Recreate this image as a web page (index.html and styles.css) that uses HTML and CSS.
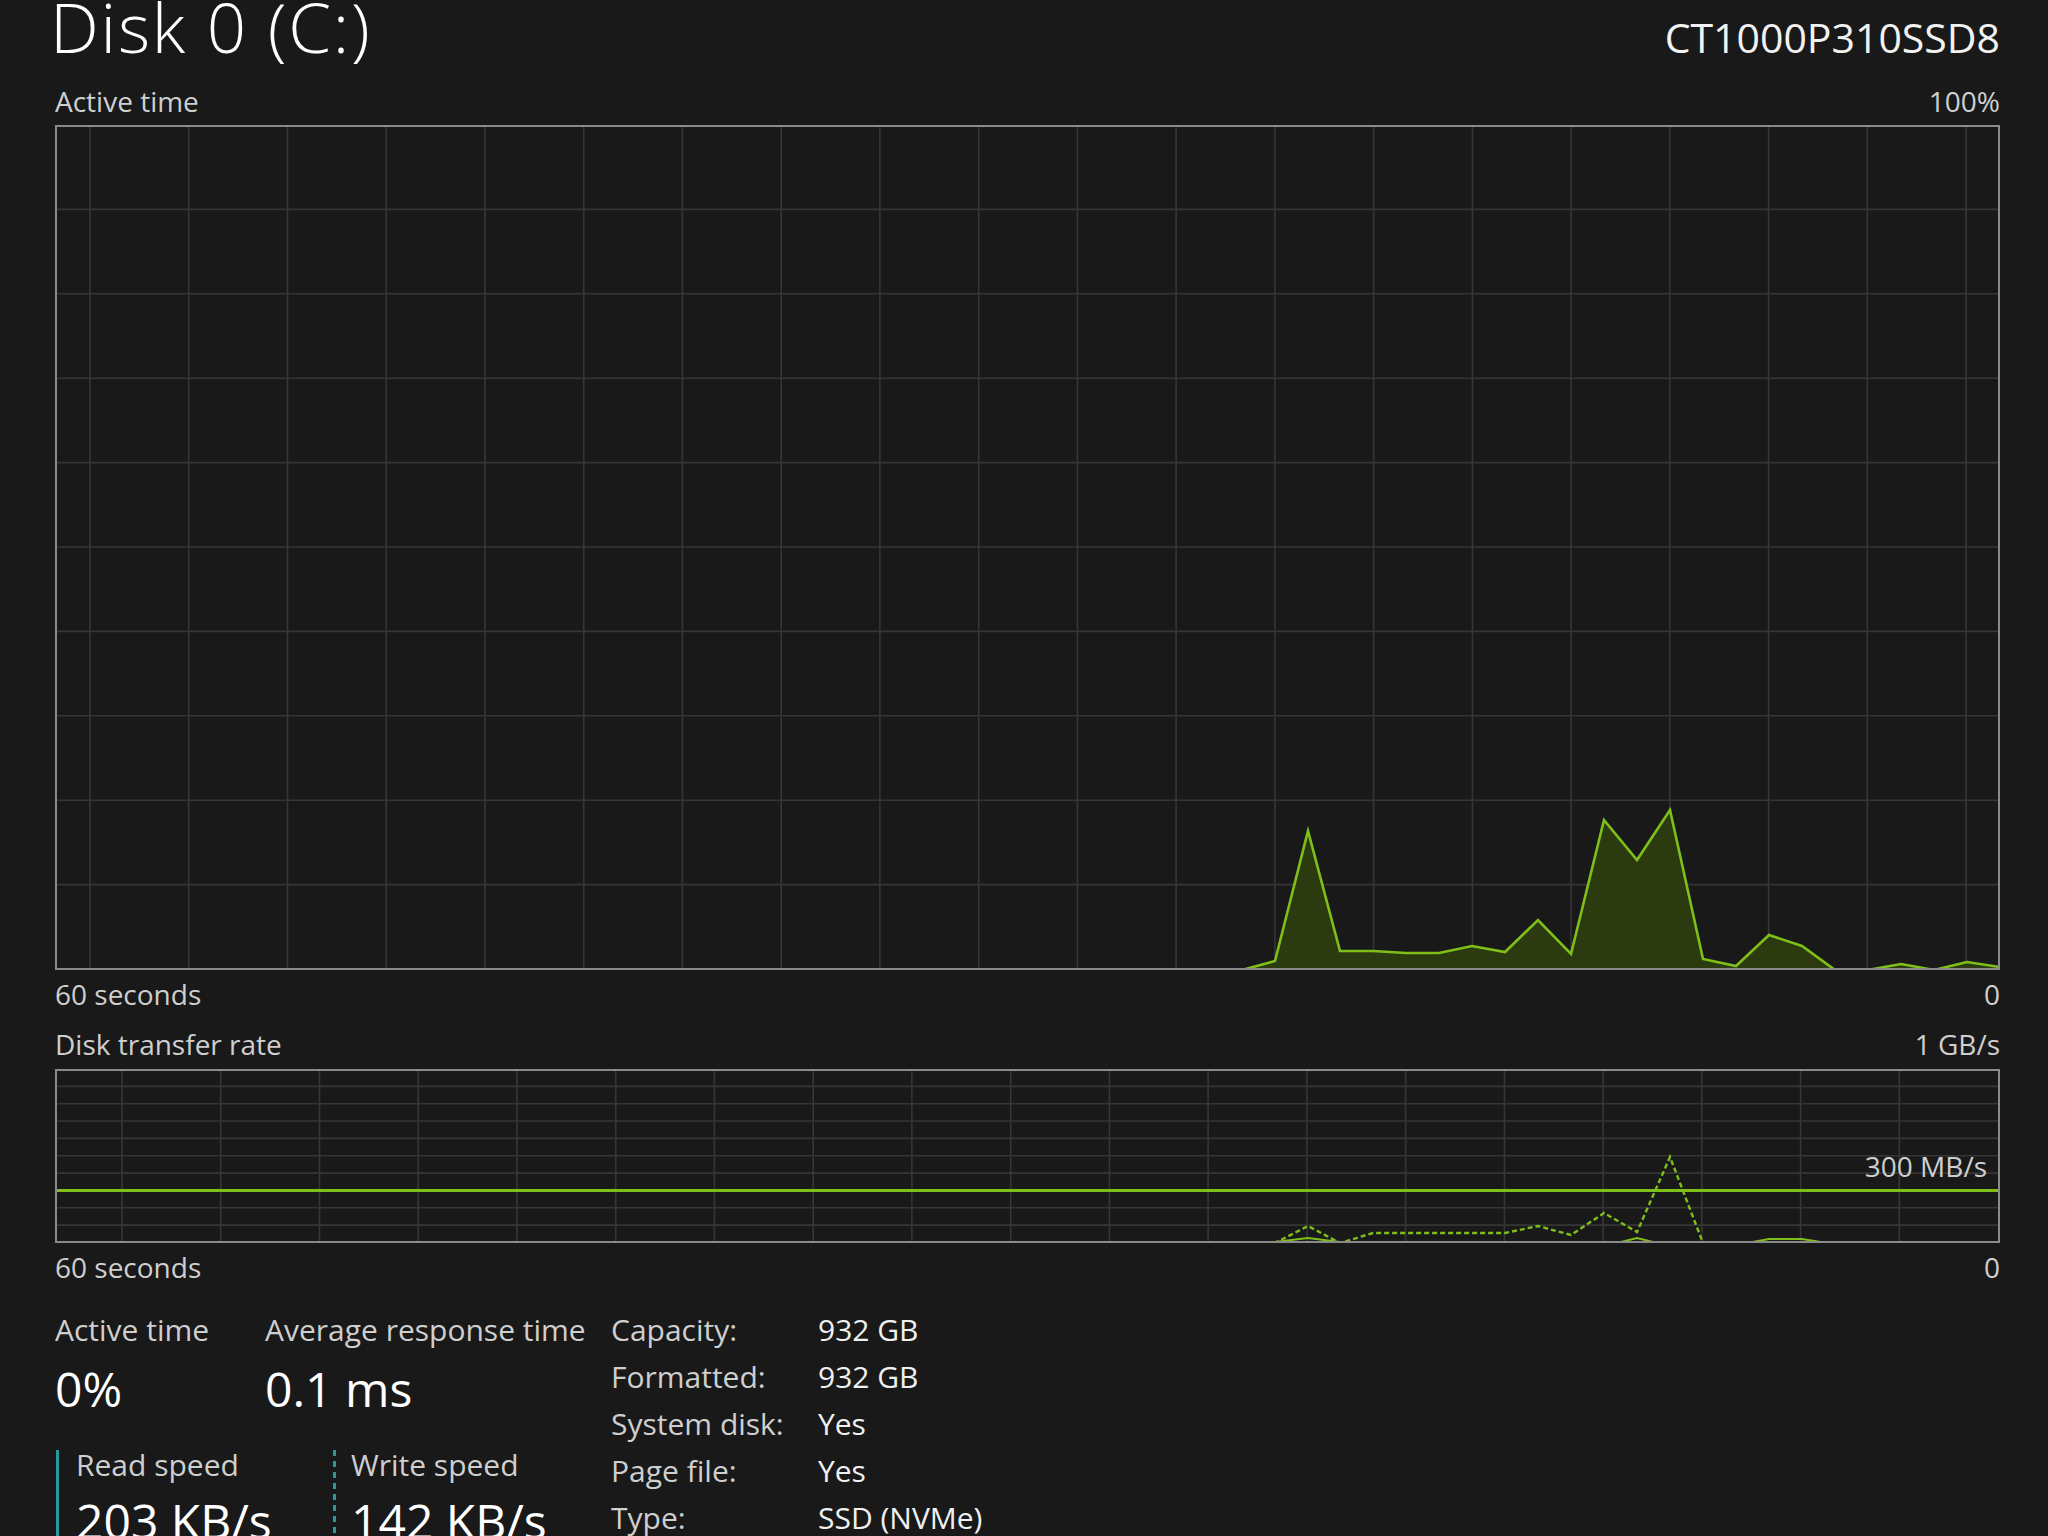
FILE: index.html
```html
<!DOCTYPE html>
<html lang="en">
<head>
<meta charset="utf-8">
<title>Disk 0 (C:)</title>
<link rel="stylesheet" href="styles.css">
</head>
<body>
<main class="page">
  <header class="head">
    <h1 class="title">Disk 0 (C:)</h1>
    <div class="model">CT1000P310SSD8</div>
  </header>

  <div class="axis axis-top"><span>Active time</span><span>100%</span></div>
  <div class="chart chart-active">
    <svg width="1941" height="841" viewBox="0 0 1941 841">
      <path class="grid" d="M0 82.4H1941M0 166.8H1941M0 251.2H1941M0 335.6H1941M0 420H1941M0 504.4H1941M0 588.8H1941M0 673.2H1941M0 757.6H1941"/>
      <path class="grid" d="M33 0V841M131.7 0V841M230.5 0V841M329.2 0V841M428 0V841M526.7 0V841M625.4 0V841M724.2 0V841M822.9 0V841M921.7 0V841M1020.4 0V841M1119.1 0V841M1217.9 0V841M1316.6 0V841M1415.4 0V841M1514.1 0V841M1612.8 0V841M1711.6 0V841M1810.3 0V841M1909.1 0V841"/>
      <polygon class="area" points="0,844 1152,844 1185,843 1218,834 1251,704 1283,824 1316,824 1349,826 1382,826 1415,819 1448,825 1481,793 1514,827 1547,693 1580,733 1613,683 1646,832 1679,839 1712,808 1745,819 1778,843 1811,843 1844,837 1877,843 1910,835 1943,840 1943,844"/>
      <polyline class="line" points="0,844 1152,844 1185,843 1218,834 1251,704 1283,824 1316,824 1349,826 1382,826 1415,819 1448,825 1481,793 1514,827 1547,693 1580,733 1613,683 1646,832 1679,839 1712,808 1745,819 1778,843 1811,843 1844,837 1877,843 1910,835 1943,840"/>
    </svg>
  </div>
  <div class="axis axis-bottom"><span>60 seconds</span><span>0</span></div>

  <div class="axis axis-rate"><span>Disk transfer rate</span><span>1 GB/s</span></div>
  <div class="chart chart-rate">
    <svg width="1941" height="170" viewBox="0 0 1941 170">
      <path class="grid" d="M0 15.35H1941M0 32.7H1941M0 50.05H1941M0 67.4H1941M0 84.75H1941M0 102.1H1941M0 136.8H1941M0 154.15H1941"/>
      <path class="grid" d="M65 0V170M163.7 0V170M262.5 0V170M361.2 0V170M460 0V170M558.7 0V170M657.4 0V170M756.2 0V170M854.9 0V170M953.7 0V170M1052.4 0V170M1151.1 0V170M1249.9 0V170M1348.6 0V170M1447.4 0V170M1546.1 0V170M1644.8 0V170M1743.6 0V170M1842.3 0V170"/>
      <path class="limit" d="M0 119.45H1941"/>
      <polyline class="read" points="1170,172 1218,171 1251,167 1283,171 1560,172 1580,167 1600,172 1690,172 1712,168 1745,168 1770,172"/>
      <polyline class="write" points="1185,172 1218,172 1251,155 1283,172 1316,162 1349,162 1382,162 1415,162 1448,162 1481,155 1514,164 1547,142 1580,161 1613,86 1646,172"/>
    </svg>
    <span class="limit-label">300 MB/s</span>
  </div>
  <div class="axis axis-bottom"><span>60 seconds</span><span>0</span></div>

  <section class="stats">
    <div class="metrics">
      <div class="metric-row">
        <div class="metric metric-active">
          <div class="stat-label">Active time</div>
          <div class="stat-value">0%</div>
        </div>
        <div class="metric metric-resp">
          <div class="stat-label">Average response time</div>
          <div class="stat-value">0.1 ms</div>
        </div>
      </div>
      <div class="metric-row io-row">
        <div class="io io-read">
          <div class="io-label">Read speed</div>
          <div class="stat-value io-value">203 KB/s</div>
        </div>
        <div class="io io-write">
          <div class="io-label">Write speed</div>
          <div class="stat-value io-value">142 KB/s</div>
        </div>
      </div>
    </div>
    <dl class="info">
      <dt>Capacity:</dt><dd>932 GB</dd>
      <dt>Formatted:</dt><dd>932 GB</dd>
      <dt>System disk:</dt><dd>Yes</dd>
      <dt>Page file:</dt><dd>Yes</dd>
      <dt>Type:</dt><dd>SSD (NVMe)</dd>
    </dl>
  </section>
</main>
</body>
</html>
```
FILE: styles.css
```css
* {
  box-sizing: border-box;
  margin: 0;
  padding: 0;
}

html, body {
  background: #191919;
  height: 100%;
  overflow: hidden;
}

body {
  font-family: "Open Sans", "Noto Sans", "Liberation Sans", sans-serif;
  color: #cfcfcf;
}

.page {
  width: 2000px;
  padding-left: 55px;
}

.head {
  display: flex;
  justify-content: space-between;
  align-items: baseline;
  height: 52px;
}

.title {
  font-size: 69px;
  font-weight: 300;
  letter-spacing: 1.8px;
  line-height: 52px;
  color: #ffffff;
  margin-left: -5px;
}

.model {
  font-size: 41px;
  line-height: 1;
  color: #f2f2f2;
}

.axis {
  display: flex;
  justify-content: space-between;
  font-size: 28px;
  line-height: 28px;
  height: 28px;
  color: #cfcfcf;
}

.axis-top {
  margin-top: 35px;
  margin-bottom: 10px;
}

.axis-bottom {
  margin-top: 10px;
}

.axis-rate {
  margin-top: 22px;
  margin-bottom: 11px;
}

.chart {
  position: relative;
  border: 2px solid #8a8a8a;
  overflow: hidden;
}

.chart svg {
  display: block;
}

.chart-active {
  height: 845px;
}

.chart-rate {
  height: 174px;
}

.grid {
  stroke: #363636;
  stroke-width: 1.6;
  fill: none;
}

.area {
  fill: #2c3a10;
  stroke: none;
}

.line {
  fill: none;
  stroke: #7fbf1a;
  stroke-width: 2.6;
  stroke-linejoin: miter;
}

.limit {
  stroke: #7fbf1a;
  stroke-width: 3;
}

.read {
  fill: none;
  stroke: #7fbf1a;
  stroke-width: 2;
}

.write {
  fill: none;
  stroke: #7fbf1a;
  stroke-width: 2.4;
  stroke-dasharray: 5 3;
}

.limit-label {
  position: absolute;
  right: 11px;
  top: 81px;
  font-size: 28px;
  line-height: 28px;
  color: #cfcfcf;
}

.stats {
  display: flex;
  margin-top: 25px;
}

.metrics {
  width: 556px;
}

.metric-row {
  display: flex;
}

.metric-active {
  width: 210px;
}

.metric-resp {
  width: 346px;
}

.stat-label {
  font-size: 30px;
  line-height: 47px;
  color: #cfcfcf;
}

.stat-value {
  font-size: 48px;
  line-height: 56px;
  margin-top: 8px;
  color: #ffffff;
}

.io-row {
  margin-top: 33px;
}

.io {
  padding-left: 17px;
}

.io-read {
  width: 277px;
  margin-left: 1px;
  border-left: 3px solid #2a9a9c;
}

.io-write {
  padding-left: 18px;
  background: repeating-linear-gradient(to bottom, #2a9a9c 0 6px, transparent 6px 11px) left top / 3px 100% no-repeat;
}

.io-label {
  font-size: 30px;
  line-height: 30px;
  color: #cfcfcf;
}

.io-value {
  margin-top: 13px;
}

.info {
  display: grid;
  grid-template-columns: 207px auto;
  grid-auto-rows: 47px;
  font-size: 30px;
  line-height: 47px;
}

.info dt {
  color: #cfcfcf;
}

.info dd {
  color: #f0f0f0;
}
```
